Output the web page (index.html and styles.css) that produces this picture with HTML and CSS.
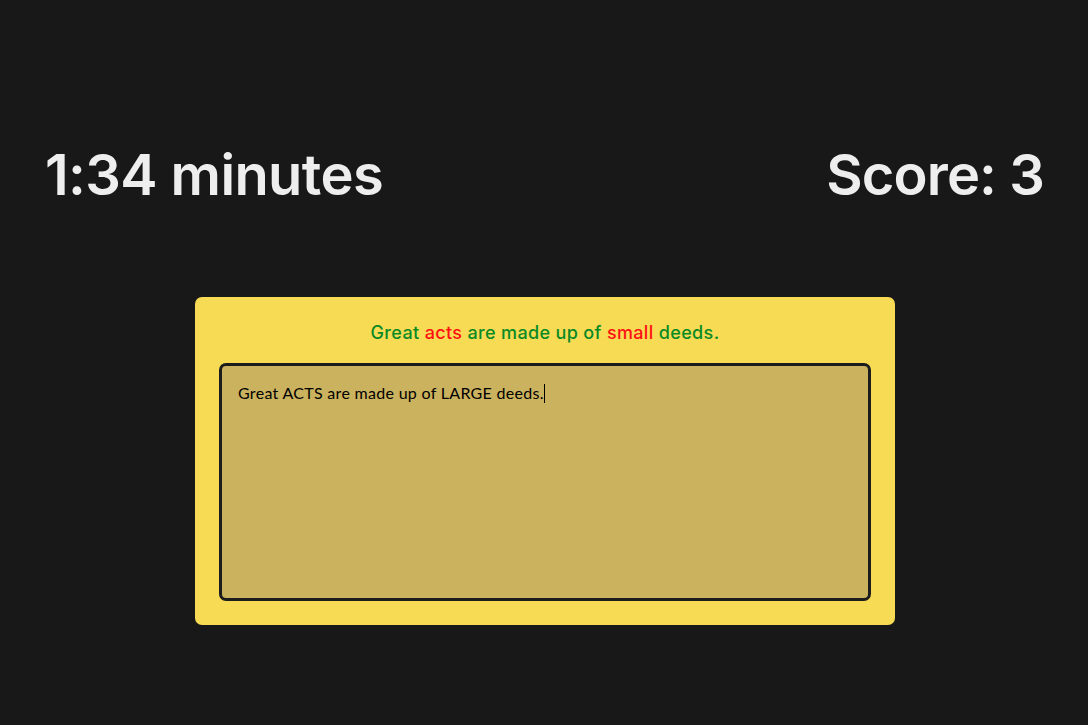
FILE: index.html
```html
<!DOCTYPE html>
<html lang="en">
<head>
<meta charset="utf-8">
<title>Typing test</title>
<link rel="stylesheet" href="styles.css">
</head>
<body>
<div class="page">
  <header class="stats">
    <div class="timer">1:34 minutes</div>
    <div class="score">Score: 3</div>
  </header>
  <main class="card">
    <p class="quote"><span class="ok">Great</span> <span class="bad">acts</span> <span class="ok">are made up of</span> <span class="bad">small</span> <span class="ok">deeds.</span></p>
    <div class="input">Great ACTS are made up of LARGE deeds.<span class="caret"></span></div>
  </main>
</div>
</body>
</html>
```
FILE: styles.css
```css
html, body {
  margin: 0;
  padding: 0;
  background: #181818;
}
.page {
  width: 1088px;
  height: 725px;
  display: flex;
  flex-direction: column;
  align-items: center;
  font-family: "Inter", "Noto Sans", sans-serif;
}
.stats {
  align-self: stretch;
  display: flex;
  justify-content: space-between;
  align-items: center;
  padding: 138px 44px 0 45px;
  height: 74px;
  color: #eeeeee;
  font-size: 56px;
  font-weight: 600;
  letter-spacing: -0.6px;
}
.score {
  letter-spacing: -0.9px;
}
.card {
  margin: 85px 0 0 2px;
  width: 652px;
  padding: 22px 24px 24px;
  background: #f7db55;
  border-radius: 7px;
}
.quote {
  margin: 0 0 16px;
  text-align: center;
  font-size: 18px;
  font-weight: 500;
  line-height: 28px;
  letter-spacing: 0.35px;
}
.ok { color: #0a8a24; }
.bad { color: #ff1010; }
.input {
  box-sizing: border-box;
  height: 238px;
  border: 3px solid #1c1c1c;
  border-radius: 7px;
  background: #cbb25e;
  padding: 16px 16px;
  font-family: "Lato", "Liberation Sans", sans-serif;
  font-size: 16px;
  line-height: 22px;
  letter-spacing: 0.3px;
  color: #000;
}
.caret {
  display: inline-block;
  width: 1px;
  height: 19px;
  background: #000;
  vertical-align: -4px;
}
```
